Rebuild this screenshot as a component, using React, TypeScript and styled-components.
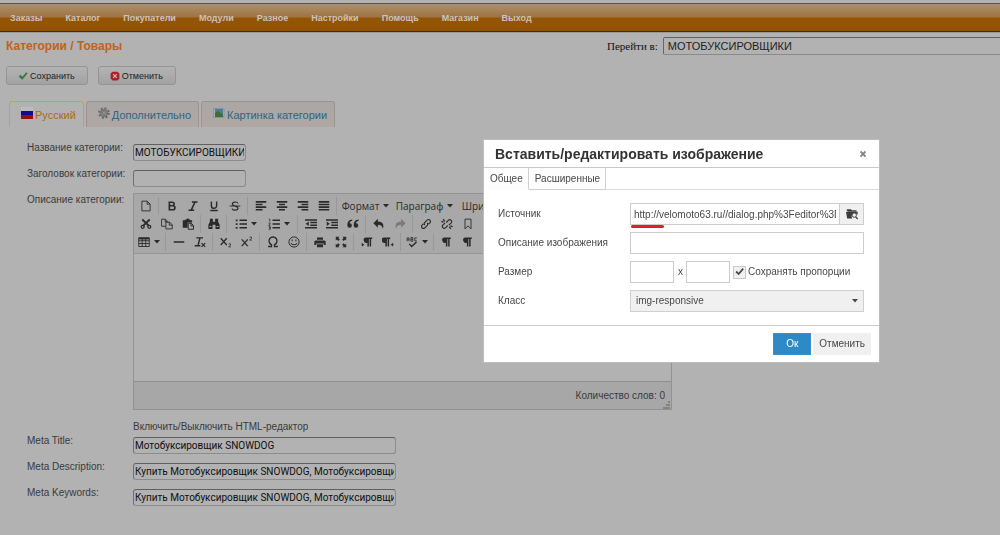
import React from 'react';
import styled, { createGlobalStyle, css } from 'styled-components';

const sans = '"Liberation Sans", Arial, sans-serif';

const GlobalStyle = createGlobalStyle`
  *, *::before, *::after { box-sizing: border-box; }
  html { background: #b2b2b2; }
  body { margin: 0; font: 10px/16px ${sans}; color: #3a3a3a; }
  button, input, select { font: inherit; color: inherit; margin: 0; }
`;

const Page = styled.div`
  min-height: 100vh;
  overflow: hidden;
`;

const Nav = styled.nav`
  display: flex;
  gap: 23px;
  height: 29px;
  margin-top: 3px;
  padding: 0 10px;
  align-items: center;
  border-top: 1px solid #555;
  border-bottom: 1px solid #46290a;
  background: linear-gradient(#ab9070 0, #9f7440 13px, #965505 14px, #925200 100%);
  box-shadow: 0 1px 0 #9a9a9a;
`;

const NavLink = styled.a`
  color: #cbc3ba;
  font-size: 9px;
  font-weight: bold;
  text-decoration: none;
`;

const TitleRow = styled.header`
  display: flex;
  align-items: center;
  padding: 5px 0 0 6px;
`;

const Title = styled.h1`
  flex: 1;
  margin: 0;
  font-size: 12px;
  line-height: 18px;
  color: #c0621a;
`;

const Jump = styled.label`
  display: flex;
  flex: 0 0 393px;
  align-items: center;
  gap: 5px;
  font: 11px/18px "Liberation Serif", "Times New Roman", serif;
  color: #111;
`;

const JumpSelect = styled.select`
  flex: 1;
  height: 18px;
  padding: 0 4px;
  appearance: none;
  border: 1px solid #8a8a8a;
  border-top-color: #606060;
  border-left-color: #666;
  border-right: 0;
  border-radius: 2px 0 0 2px;
  background: #b2b2b2;
  font: 11px/16px ${sans};
  color: #222;
`;

const Actions = styled.div`
  display: flex;
  gap: 10px;
  padding: 11px 6px 0;
`;

const ActionButton = styled.button`
  display: flex;
  align-items: center;
  gap: 2px;
  height: 19px;
  padding: 0 12px 0 11px;
  border: 1px solid #949494;
  border-radius: 3px;
  background: linear-gradient(#b4b4b4, #a2a2a2);
  color: #1e1e1e;
  font-size: 9px;
  white-space: nowrap;
`;

const Tabs = styled.div`
  display: flex;
  gap: 2px;
  padding: 16px 9px 0;
`;

const Tab = styled.button<{ $active?: boolean }>`
  display: flex;
  align-items: center;
  gap: 2px;
  height: 26px;
  padding: 0 7px 0 11px;
  border: 1px solid #9b9290;
  border-bottom: 0;
  border-radius: 3px 3px 0 0;
  background: linear-gradient(#aaa7a6, #b0a7a4);
  color: #2c6580;
  font-size: 11px;
  white-space: nowrap;
  svg { margin-bottom: 3px; }
  ${p => p.$active && css`
    border-color: #bda454;
    background: #b2b2b2;
    color: #ac6a18;
  `}
`;

const Form = styled.form`
  padding: 13px 27px 0;
`;

const Row = styled.div`
  display: flex;
  min-height: 26px;
`;

const RowLabel = styled.label`
  flex: 0 0 106px;
  white-space: nowrap;
`;

const TextInput = styled.input<{ $wide?: boolean }>`
  flex: 0 0 ${p => (p.$wide ? 263 : 113)}px;
  width: 0;
  height: 17px;
  margin-top: 4px;
  padding: 0 1px;
  border: 1px solid #8c8c8c;
  border-top-color: #606060;
  border-left-color: #707070;
  border-radius: 3px;
  background: #b2b2b2;
  font: 10px/15px Roboto, "Open Sans", sans-serif;
  color: #101010;
`;

const Editor = styled.div`
  flex: 0 1 539px;
  margin-top: 1px;
  border: 1px solid #929292;
  background: #b2b2b2;
`;

const Toolbar = styled.div`
  height: 60px;
  padding: 3px 0 2px 1px;
  overflow: hidden;
  border-bottom: 1px solid #969696;
  background: #a8a8a8;
`;

const ToolRow = styled.div`
  display: flex;
  height: 18px;
`;

const ToolGroup = styled.div`
  display: flex;
  flex-shrink: 0;
  & + & {
    margin-left: 2px;
    padding-left: 2px;
    border-left: 1px solid #989898;
  }
`;

const Tool = styled.button<{ $width?: number; $faded?: boolean }>`
  display: flex;
  align-items: center;
  justify-content: center;
  gap: 4px;
  width: ${p => p.$width ?? 21}px;
  height: 18px;
  padding: 0;
  border: 0;
  background: none;
  color: ${p => (p.$faded ? '#7a7a7a' : '#2a2a2a')};
  font: 10px/18px "Open Sans", sans-serif;
  white-space: nowrap;
`;

const Canvas = styled.div`
  height: 127px;
`;

const Status = styled.div`
  display: flex;
  justify-content: flex-end;
  align-items: center;
  height: 28px;
  padding: 0 1px;
  border-top: 1px solid #8f8f8f;
  background: #a7a7a7;
`;

const Grip = styled.svg`
  align-self: flex-end;
  margin-left: -3px;
`;

const Toggle = styled.a`
  display: block;
  margin: 11px 0 0 106px;
  line-height: 12px;
  color: inherit;
  text-decoration: none;
`;

const Modal = styled.section`
  position: fixed;
  top: 140px;
  right: 121px;
  width: 395px;
  background: #fff;
  color: #484848;
  box-shadow: 0 0 0 1px #bdbdbd;
`;

const ModalHead = styled.header`
  display: flex;
  align-items: center;
  justify-content: space-between;
  height: 28px;
  padding: 0 12px 0 11px;
  border-bottom: 1px solid #c9c9c9;
`;

const ModalTitle = styled.h2`
  margin: 0;
  font-size: 14px;
  color: #333;
  white-space: nowrap;
`;

const CloseButton = styled.button`
  display: flex;
  padding: 0;
  border: 0;
  background: none;
  color: #858585;
`;

const ModalTabs = styled.div`
  display: flex;
  height: 22px;
  box-shadow: inset 0 -1px 0 #dcdcdc;
`;

const ModalTab = styled.button<{ $active?: boolean }>`
  padding: 0 5px 0 6px;
  border: 0;
  border-right: 1px solid #cfcfcf;
  border-bottom: 1px solid ${p => (p.$active ? '#fdfdfd' : '#cfcfcf')};
  background: #fdfdfd;
`;

const Fields = styled.div`
  display: flex;
  flex-direction: column;
  gap: 7px;
  padding: 13px 15px 13px 14px;
`;

const Field = styled.div`
  display: flex;
  align-items: center;
  height: 22px;
`;

const FieldLabel = styled.label`
  flex: 0 0 132px;
`;

const FieldInput = styled.input<{ $size?: 'small' }>`
  flex: ${p => (p.$size ? '0 0 44px' : '1')};
  width: 0;
  height: 22px;
  padding: 0 3px;
  border: 1px solid #cdcdcd;
  background: #fff;
`;

const SourceBox = styled.div`
  position: relative;
  display: flex;
  flex: 1;
`;

const Marker = styled.span`
  position: absolute;
  left: 1px;
  bottom: -3px;
  width: 33px;
  height: 3px;
  border-radius: 2px;
  background: #e81c28;
`;

const BrowseButton = styled.button`
  display: flex;
  align-items: center;
  justify-content: center;
  width: 24px;
  padding: 0;
  border: 1px solid #cdcdcd;
  border-left: 0;
  background: #f0f0f0;
  color: #3c3c3c;
`;

const Times = styled.span`
  padding: 0 3px 0 4px;
`;

const KeepRatio = styled.label`
  position: relative;
  display: flex;
  align-items: center;
  gap: 2px;
  margin-left: 3px;
  white-space: nowrap;
  svg { position: absolute; left: 2px; top: 3px; pointer-events: none; }
`;

const CheckBox = styled.input`
  appearance: none;
  width: 13px;
  height: 13px;
  border: 1px solid #c8c8c8;
  background: #f0f0f0;
`;

const SelectBox = styled.div`
  position: relative;
  display: flex;
  flex: 1;
  svg { position: absolute; right: 6px; top: 9px; pointer-events: none; }
`;

const ClassSelect = styled.select`
  flex: 1;
  height: 22px;
  padding: 0 5px;
  appearance: none;
  border: 1px solid #d0d0d0;
  border-radius: 0;
  background: #f0f0f0;
`;

const ModalFoot = styled.footer`
  display: flex;
  justify-content: flex-end;
  gap: 2px;
  padding: 7px 8px;
  border-top: 1px solid #cccccc;
`;

const FootButton = styled.button<{ $primary?: boolean }>`
  height: 22px;
  padding: 0 ${p => (p.$primary ? 12 : 5)}px;
  border: 1px solid ${p => (p.$primary ? '#3c90cb' : '#f0f0f0')};
  background: ${p => (p.$primary ? '#2d8ac7' : '#f0f0f0')};
  color: ${p => (p.$primary ? '#fff' : '#484848')};
`;

const line = (d: string, w = 1.6) => <path d={d} fill="none" stroke="currentColor" strokeWidth={w} />;
const fill = (d: string) => <path d={d} fill="currentColor" fillRule="evenodd" />;
const pilcrow = 'M6 2h9v2h-1.500v10h-2V4H10.500v10h-2V9A3.500 3.500 0 0 1 6 2z';

const shapes: Record<string, React.ReactNode> = {
  doc: line('M2.500 1.500h7l4 4v9h-11zM9.500 1.500v4h4', 1.2),
  bold: line('M4.500 3h4a2.300 2.300 0 0 1 0 4.600h-4zM4.500 7.600h4.700a2.700 2.700 0 0 1 0 5.400H4.500z', 2.2),
  italic: line('M6.500 2.500H14M2 13.500h7.500M10.800 2.500L5.600 13.500', 2),
  underline: line('M4.500 2v5.500a3.500 3.500 0 0 0 7 0V2M3 14h10', 1.9),
  strike: line('M12 4.500C11 2 4.500 2 4.500 5.200S12 8 12 11 5 14.500 4 11.500M1 8h14', 1.6),
  left: line('M1 2.500h14M1 6h9M1 9.500h14M1 13h9', 2.1),
  center: line('M1 2.500h14M4 6h8M1 9.500h14M4 13h8', 2.1),
  right: line('M1 2.500h14M6 6h9M1 9.500h14M6 13h9', 2.1),
  justify: line('M1 2.500h14M1 6h14M1 9.500h14M1 13h14', 2.1),
  cut: <>{line('M3 2l9 8.500M13 2l-9 8.500', 2.5)}<circle cx="3.600" cy="11.800" r="2" fill="none" stroke="currentColor" strokeWidth="1.700" /><circle cx="12.400" cy="11.800" r="2" fill="none" stroke="currentColor" strokeWidth="1.700" /></>,
  copy: line('M6 11H.8V1.500h5l3 3V5M5.500 1.500V5h3M6.500 5.500h5l3.500 3.500v5.500H6.500zM11 5.500v4h4', 1.2),
  paste: <>{fill('M1 3h3V2h2l1-1.500h1.500L9.500 2H11v1h2.500v3H7.500v7H1z')}{line('M8.300 7h4l3 3v5H8.300zM12 7v3.500h3.500', 1.3)}</>,
  find: fill('M2.500 1h4v4h3V1h4v4L15.500 9v5.500H10V9H6v5.500H.500V9L2.500 5zM2 12h2.500v-1.500H2zM11.500 12H14v-1.500h-2.500z'),
  ul: <>{line('M6 3h10M6 8h10M6 13h10', 1.9)}{fill('M1 2h2.400v2.400H1zM1 7h2.400v2.400H1zM1 12h2.400v2.400H1z')}</>,
  ol: <>{line('M6 3h10M6 8h10M6 13h10', 1.9)}{line('M1 1.500h1.500V5M.800 6.800h2v1.500l-2 1.500h2.300M.800 11.500h2.300v1.600H1.500h1.600v2H.800', 1)}</>,
  outdent: <>{line('M0 2.500h16M7 6h9M7 9.500h9M0 13h16', 2)}{fill('M5 4.800v6L.800 7.800z')}</>,
  indent: <>{line('M0 2.500h16M7 6h9M7 9.500h9M0 13h16', 2)}{fill('M1 4.800v6l4.200-3z')}</>,
  quote: fill('M7 3.500C4 4 3.500 6 3.600 7A3 3 0 1 1 .500 10C.200 5.500 2.500 2.200 7 2zM15.500 3.500C12.500 4 12 6 12.100 7A3 3 0 1 1 9 10C8.700 5.500 11 2.200 15.500 2z'),
  undo: fill('M6.500 1v3.500c6 0 9 4 6.500 10-.3-4-2.500-5.500-6.500-5.500v4L.500 7z'),
  redo: fill('M9.500 1v3.500c-6 0-9 4-6.500 10 .3-4 2.500-5.500 6.500-5.500v4l6-6z'),
  link: line('M6.500 9.500a2.600 2.600 0 0 1 0-3.600l3-3a2.600 2.600 0 0 1 3.700 3.700L11.500 8.300M9.500 6.500a2.600 2.600 0 0 1 0 3.600l-3 3a2.600 2.600 0 0 1-3.700-3.700L4.500 7.700', 1.5),
  unlink: line('M7 6l3-3.100a2.600 2.600 0 0 1 3.600 3.700L10.500 9.500M9 10l-3 3.100a2.600 2.600 0 0 1-3.600-3.700L5.500 6.500M3 1.500l2 3M.5 4.500l3 1M13 14.500l-2-3M15.500 11.500l-3-1', 1.5),
  bookmark: line('M4 1.500h8v13l-4-4-4 4z', 1.2),
  table: <>{line('M1 2.500h14v11.500H1zM1 6.300h14M1 10h14M5.600 3v11M10.300 3v11', 1.2)}{fill('M1 2h14v2.500H1z')}</>,
  hr: line('M1 8h14', 2),
  clear: <>{line('M3 2.500h9M8 2.500L5.500 12M1 13h7.500', 1.9)}{line('M10 9.500l5 5M15 9.500l-5 5', 1.6)}</>,
  sub: <>{line('M1 3l8 9M9 3l-8 9', 1.7)}{line('M11.500 10.500h2.500v1.500l-2.500 2.500H14.500', 1.1)}</>,
  sup: <>{line('M1 4.500l8 9M9 4.500l-8 9', 1.7)}{line('M11.500 1.500h2.500V3l-2.500 2.500H14.500', 1.1)}</>,
  omega: line('M1.500 14H6v-2.500A5.300 5.300 0 1 1 10 11.500V14h4.500', 1.8),
  smile: <><circle cx="8" cy="8" r="6.800" fill="none" stroke="currentColor" strokeWidth="1.300" />{line('M4 9.500c1.500 3 6.500 3 8 0M5.500 4.500v2.500M10.500 4.500v2.500', 1.4)}</>,
  print: fill('M4 2h8v3H4zM2 6h12l1.500 1v5H13v-2H3v2H.500V7zM4 11h8v4H4z'),
  full: <>{fill('M1 1h5L4.500 2.500l2 2-2 2-2-2L1 6zM15 1v5l-1.500-1.500-2 2-2-2 2-2L10 1zM1 15v-5l1.500 1.500 2-2 2 2-2 2L6 15zM15 15h-5l1.500-1.500-2-2 2-2 2 2L15 10z')}</>,
  ltr: <>{fill(pilcrow)}{fill('M1 9l3.500 2.500L1 14z')}</>,
  rtl: <><g transform="translate(-4 0)">{fill(pilcrow)}</g>{fill('M15 9l-3.500 2.500L15 14z')}</>,
  pilcrow: <g transform="translate(-2 0)">{fill(pilcrow)}</g>,
  spell: <>{line('M1.500 7V2.500h2.500V7M1.500 5h2.500M6.500 2v5H9V2H6.500M6.500 4.500H9M14.500 2.500h-2.800v4h2.800', 1.1)}{line('M4.500 10.500l3 3.500L14 8', 2)}</>,
  image: line('M1 2.500h14v11H1zM2 12l4-5 3 3 2-2 3 4', 1.3),
  browse: <>{fill('M1 3V1.500h5.500L8 3h6v1.500H2.500zM0 5h15.500v4a4 4 0 0 0-7 5H1.500z')}<circle cx="11" cy="9.500" r="2.900" fill="#f0f0f0" stroke="currentColor" strokeWidth="1.200" />{line('M13 11.800l2.600 3', 1.8)}</>,
  close: line('M3 3l10 10M13 3L3 13', 3.6),
  check: line('M2 8l4.500 4.500L14.500 3', 3.2),
};

const Icon = ({ name, size = 12 }: { name: string; size?: number }) => (
  <svg width={size} height={size} viewBox="0 0 16 16" aria-hidden="true">{shapes[name]}</svg>
);

const Caret = () => (
  <svg width="6" height="4" viewBox="0 0 6 4" aria-hidden="true"><path d="M0 0h6L3 3.500z" fill="currentColor" /></svg>
);

type ToolDef = { icon?: string; text?: string; caret?: boolean; width?: number; faded?: boolean };
const t = (...names: string[]): ToolDef[] => names.map(icon => ({ icon }));

const toolRows: ToolDef[][][] = [
  [
    t('doc'),
    t('bold', 'italic', 'underline', 'strike'),
    t('left', 'center', 'right', 'justify'),
    [
      { text: 'Формат', caret: true, width: 53 },
      { text: 'Параграф', caret: true, width: 65 },
      { text: 'Шрифт', caret: true, width: 54 },
    ],
  ],
  [
    t('cut', 'copy', 'paste'),
    t('find'),
    [{ icon: 'ul', caret: true, width: 33 }, { icon: 'ol', caret: true, width: 33 }],
    t('outdent', 'indent', 'quote'),
    [{ icon: 'undo' }, { icon: 'redo', faded: true }],
    t('link', 'unlink', 'bookmark', 'image'),
  ],
  [
    [{ icon: 'table', caret: true, width: 28 }],
    t('hr', 'clear'),
    t('sub', 'sup'),
    t('omega', 'smile'),
    t('print', 'full'),
    t('ltr', 'rtl'),
    [{ icon: 'spell', caret: true, width: 28 }],
    t('pilcrow', 'pilcrow'),
  ],
];

const menu = ['Заказы', 'Каталог', 'Покупатели', 'Модули', 'Разное', 'Настройки', 'Помощь', 'Магазин', 'Выход'];

const metaFields = [
  { id: 'meta-title', label: 'Meta Title:', value: 'Мотобуксировщик SNOWDOG' },
  { id: 'meta-description', label: 'Meta Description:', value: 'Купить Мотобуксировщик SNOWDOG, Мотобуксировщики' },
  { id: 'meta-keywords', label: 'Meta Keywords:', value: 'Купить Мотобуксировщик SNOWDOG, Мотобуксировщики' },
];

const SaveIcon = () => (
  <svg width="10" height="10" viewBox="0 0 16 16" aria-hidden="true"><path d="M1 9l3-3 3 3 6-7 2.500 1.500L7 14z" fill="#3c7a3c" /></svg>
);

const CancelIcon = () => (
  <svg width="10" height="10" viewBox="0 0 16 16" aria-hidden="true">
    <path d="M4 1h8l3 3v8l-3 3H4l-3-3V4z" fill="#ad1f26" />
    <path d="M5 5l6 6M11 5l-6 6" stroke="#c9b4b4" strokeWidth="2.200" />
  </svg>
);

const FlagIcon = () => (
  <svg width="12" height="12" viewBox="0 0 12 12" aria-hidden="true">
    <path d="M0 0h12v4H0z" fill="#bcbcbc" />
    <path d="M0 4h12v4H0z" fill="#0c0c8c" />
    <path d="M0 8h12v4H0z" fill="#8c1014" />
  </svg>
);

const GearIcon = () => (
  <svg width="12" height="12" viewBox="0 0 16 16" aria-hidden="true">
    <circle cx="8" cy="8" r="6.500" fill="none" stroke="#666" strokeWidth="2.500" strokeDasharray="2.600 2.500" />
    <circle cx="8" cy="8" r="4.500" fill="#8c8c8c" stroke="#727272" strokeWidth="2" />
    <circle cx="8" cy="8" r="1.800" fill="#b4b0af" stroke="#666" />
  </svg>
);

const PictureIcon = () => (
  <svg width="12" height="12" viewBox="0 0 12 12" aria-hidden="true">
    <path d="M.5 1.500h10.500v9H.500z" fill="#aab3ba" stroke="#8594a0" />
    <path d="M2 2h8v8H2z" fill="#4d7f94" />
    <path d="M2 10V6l3-2 5 4v2z" fill="#3c6f32" />
  </svg>
);

export default function App() {
  return (
    <Page>
      <GlobalStyle />
      <Nav>
        {menu.map(item => <NavLink key={item} href="#">{item}</NavLink>)}
      </Nav>
      <TitleRow>
        <Title>Категории / Товары</Title>
        <Jump>
          Перейти в:
          <JumpSelect><option>МОТОБУКСИРОВЩИКИ</option></JumpSelect>
        </Jump>
      </TitleRow>
      <Actions>
        <ActionButton type="button"><SaveIcon />Сохранить</ActionButton>
        <ActionButton type="button"><CancelIcon />Отменить</ActionButton>
      </Actions>
      <Tabs>
        <Tab type="button" $active><FlagIcon />Русский</Tab>
        <Tab type="button"><GearIcon />Дополнительно</Tab>
        <Tab type="button"><PictureIcon />Картинка категории</Tab>
      </Tabs>
      <Form>
        <Row>
          <RowLabel htmlFor="name">Название категории:</RowLabel>
          <TextInput id="name" defaultValue="МОТОБУКСИРОВЩИКИ" />
        </Row>
        <Row>
          <RowLabel htmlFor="heading">Заголовок категории:</RowLabel>
          <TextInput id="heading" />
        </Row>
        <Row>
          <RowLabel as="span">Описание категории:</RowLabel>
          <Editor>
            <Toolbar>
              {toolRows.map((groups, r) => (
                <ToolRow key={r}>
                  {groups.map((tools, g) => (
                    <ToolGroup key={g}>
                      {tools.map((tool, i) => (
                        <Tool key={i} type="button" $width={tool.width} $faded={tool.faded} aria-label={tool.text ?? tool.icon}>
                          {tool.icon && <Icon name={tool.icon} />}
                          {tool.text}
                          {tool.caret && <Caret />}
                        </Tool>
                      ))}
                    </ToolGroup>
                  ))}
                </ToolRow>
              ))}
            </Toolbar>
            <Canvas />
            <Status>
              <span>Количество слов: 0</span>
              <Grip width="8" height="8" viewBox="0 0 8 8" aria-hidden="true">
                <path d="M6 0h2v2H6zM4 3h4v2H4zM1 6h7v2H1z" fill="#85857c" />
              </Grip>
            </Status>
          </Editor>
        </Row>
        <Toggle href="#">Включить/Выключить HTML-редактор</Toggle>
        {metaFields.map(f => (
          <Row key={f.id}>
            <RowLabel htmlFor={f.id}>{f.label}</RowLabel>
            <TextInput id={f.id} $wide defaultValue={f.value} />
          </Row>
        ))}
      </Form>

      <Modal role="dialog" aria-labelledby="dialog-title">
        <ModalHead>
          <ModalTitle id="dialog-title">Вставить/редактировать изображение</ModalTitle>
          <CloseButton type="button" aria-label="Закрыть"><Icon name="close" size={8} /></CloseButton>
        </ModalHead>
        <ModalTabs>
          <ModalTab type="button" $active>Общее</ModalTab>
          <ModalTab type="button">Расширенные</ModalTab>
        </ModalTabs>
        <Fields>
          <Field>
            <FieldLabel htmlFor="src">Источник</FieldLabel>
            <SourceBox>
              <FieldInput id="src" defaultValue="http://velomoto63.ru//dialog.php%3Feditor%3Dtinymce" />
              <BrowseButton type="button" aria-label="Обзор"><Icon name="browse" /></BrowseButton>
              <Marker />
            </SourceBox>
          </Field>
          <Field>
            <FieldLabel htmlFor="alt">Описание изображения</FieldLabel>
            <FieldInput id="alt" />
          </Field>
          <Field>
            <FieldLabel htmlFor="width">Размер</FieldLabel>
            <FieldInput id="width" $size="small" />
            <Times>x</Times>
            <FieldInput $size="small" aria-label="Высота" />
            <KeepRatio>
              <CheckBox type="checkbox" defaultChecked />
              <Icon name="check" size={9} />
              Сохранять пропорции
            </KeepRatio>
          </Field>
          <Field>
            <FieldLabel htmlFor="class">Класс</FieldLabel>
            <SelectBox>
              <ClassSelect id="class"><option>img-responsive</option></ClassSelect>
              <Caret />
            </SelectBox>
          </Field>
        </Fields>
        <ModalFoot>
          <FootButton type="button" $primary>Ок</FootButton>
          <FootButton type="button">Отменить</FootButton>
        </ModalFoot>
      </Modal>
    </Page>
  );
}
